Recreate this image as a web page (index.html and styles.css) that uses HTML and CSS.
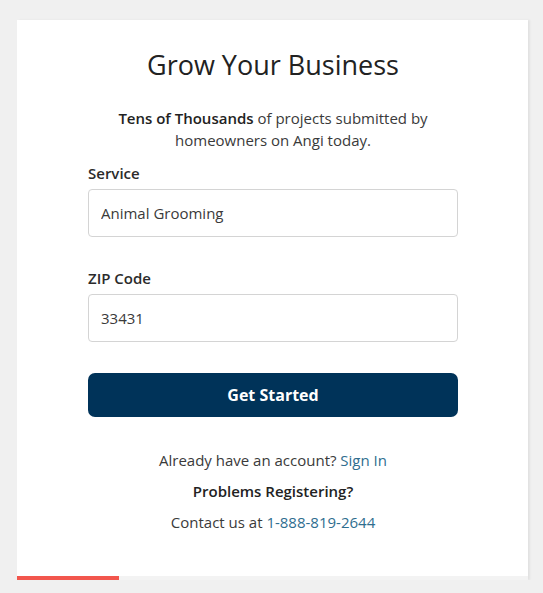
FILE: index.html
```html
<!DOCTYPE html>
<html lang="en">
<head>
<meta charset="UTF-8">
<title>Grow Your Business</title>
<link rel="stylesheet" href="styles.css">
</head>
<body>
<div class="card">
  <div class="card-body">
    <h1>Grow Your Business</h1>
    <p class="intro"><strong>Tens of Thousands</strong> of projects submitted by homeowners on Angi today.</p>
    <form class="signup">
      <label class="field">
        <span class="field-label">Service</span>
        <input type="text" value="Animal Grooming">
      </label>
      <label class="field">
        <span class="field-label">ZIP Code</span>
        <input type="text" value="33431">
      </label>
      <button type="button" class="start-btn">Get Started</button>
    </form>
    <div class="help">
      <p>Already have an account? <a href="#">Sign In</a></p>
      <p class="help-title">Problems Registering?</p>
      <p>Contact us at <a href="#">1-888-819-2644</a></p>
    </div>
  </div>
  <div class="progress"><div class="progress-fill" style="width: 20%"></div></div>
</div>
</body>
</html>
```
FILE: styles.css
```css
body {
    margin: 0;
    background-color: #f0f0f0;
    font-family: "Open Sans", "Liberation Sans", sans-serif;
    color: #2b2b2b;
}
.card {
    width: 511px;
    margin: 20px 0 0 17px;
    background: #fff;
    box-shadow: 2px 0 2px rgba(0, 0, 0, 0.06);
}
.card-body {
    padding: 28px 70px 34px 71px;
}
h1 {
    margin: 0;
    text-align: center;
    font-size: 27px;
    font-weight: 500;
    line-height: 34px;
    color: #222;
}
.intro {
    margin: 25px 0 12px;
    text-align: center;
    font-size: 15px;
    line-height: 22px;
    color: #3a3a3a;
}
.intro strong {
    font-weight: 600;
    color: #222;
}
.signup {
    display: flex;
    flex-direction: column;
}
.field {
    display: flex;
    flex-direction: column;
    margin-bottom: 31px;
}
.field-label {
    font-size: 15px;
    font-weight: 600;
    line-height: 20px;
    margin-bottom: 6px;
    color: #2b2b2b;
}
.field input {
    height: 48px;
    box-sizing: border-box;
    border: 1px solid #d4d4d4;
    border-radius: 4px;
    padding: 0 12px;
    font-family: inherit;
    font-size: 15px;
    color: #3a3a3a;
    outline: none;
}
.start-btn {
    height: 44px;
    border: none;
    border-radius: 7px;
    background-color: #003359;
    color: #fff;
    font-family: inherit;
    font-size: 16px;
    font-weight: 700;
    cursor: pointer;
}
.help {
    margin-top: 32px;
    text-align: center;
    font-size: 15px;
    color: #3a3a3a;
}
.help p {
    margin: 0 0 9px;
    line-height: 22px;
}
.help .help-title {
    font-weight: 600;
    color: #222;
}
.help a {
    color: #2f6e8f;
    text-decoration: none;
}
.progress {
    height: 4px;
    background: #f3f3f3;
}
.progress-fill {
    height: 100%;
    background: #f2564d;
}
```
